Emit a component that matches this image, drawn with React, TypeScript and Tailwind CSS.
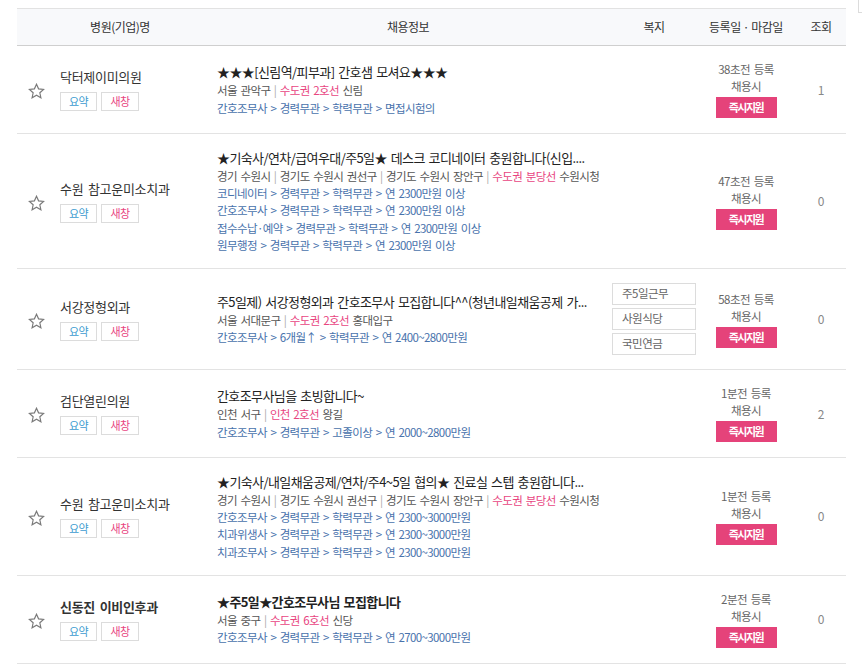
type Job = {
    name: string
    title: string
    areas: string[]
    station: string
    stop: string
    jobs: string[]
    benefits?: string[]
    posted: string
    views: number
    bold?: boolean
}

const jobs: Job[] = [
    {
        name: '닥터제이미의원',
        title: '★★★[신림역/피부과] 간호샘 모셔요★★★',
        areas: ['서울 관악구'],
        station: '수도권 2호선',
        stop: '신림',
        jobs: ['간호조무사 > 경력무관 > 학력무관 > 면접시험의'],
        posted: '38초전 등록',
        views: 1,
    },
    {
        name: '수원 참고운미소치과',
        title: '★기숙사/연차/급여우대/주5일★ 데스크 코디네이터 충원합니다(신입....',
        areas: ['경기 수원시', '경기도 수원시 권선구', '경기도 수원시 장안구'],
        station: '수도권 분당선',
        stop: '수원시청',
        jobs: [
            '코디네이터 > 경력무관 > 학력무관 > 연 2300만원 이상',
            '간호조무사 > 경력무관 > 학력무관 > 연 2300만원 이상',
            '접수수납·예약 > 경력무관 > 학력무관 > 연 2300만원 이상',
            '원무행정 > 경력무관 > 학력무관 > 연 2300만원 이상',
        ],
        posted: '47초전 등록',
        views: 0,
    },
    {
        name: '서강정형외과',
        title: '주5일제) 서강정형외과 간호조무사 모집합니다^^(청년내일채움공제 가...',
        areas: ['서울 서대문구'],
        station: '수도권 2호선',
        stop: '홍대입구',
        jobs: ['간호조무사 > 6개월↑ > 학력무관 > 연 2400~2800만원'],
        benefits: ['주5일근무', '사원식당', '국민연금'],
        posted: '58초전 등록',
        views: 0,
    },
    {
        name: '검단열린의원',
        title: '간호조무사님을 초빙합니다~',
        areas: ['인천 서구'],
        station: '인천 2호선',
        stop: '왕길',
        jobs: ['간호조무사 > 경력무관 > 고졸이상 > 연 2000~2800만원'],
        posted: '1분전 등록',
        views: 2,
    },
    {
        name: '수원 참고운미소치과',
        title: '★기숙사/내일채움공제/연차/주4~5일 협의★ 진료실 스텝 충원합니다...',
        areas: ['경기 수원시', '경기도 수원시 권선구', '경기도 수원시 장안구'],
        station: '수도권 분당선',
        stop: '수원시청',
        jobs: [
            '간호조무사 > 경력무관 > 학력무관 > 연 2300~3000만원',
            '치과위생사 > 경력무관 > 학력무관 > 연 2300~3000만원',
            '치과조무사 > 경력무관 > 학력무관 > 연 2300~3000만원',
        ],
        posted: '1분전 등록',
        views: 0,
    },
    {
        name: '신동진 이비인후과',
        title: '★주5일★간호조무사님 모집합니다',
        areas: ['서울 중구'],
        station: '수도권 6호선',
        stop: '신당',
        jobs: ['간호조무사 > 경력무관 > 학력무관 > 연 2700~3000만원'],
        posted: '2분전 등록',
        views: 0,
        bold: true,
    },
]

function StarOutline() {
    return (
        <svg width="17" height="16" viewBox="0 0 24 23" fill="none">
            <path
                d="M12 1.8l3 6.6 7.2.8-5.4 4.9 1.5 7.1L12 17.6l-6.3 3.6 1.5-7.1L1.8 9.2 9 8.4z"
                stroke="#7a7a7a"
                strokeWidth="1.7"
                strokeLinejoin="miter"
            />
        </svg>
    )
}

function JobRow({ job }: { job: Job }) {
    return (
        <div className="grid grid-cols-[43px_150px_396px_96px_88px_56px] items-center min-h-[88px] py-[14px] border-b border-[#e3e3e3]">
            {/* 관심 */}
            <div className="flex justify-end pr-[15px] pt-[3px]">
                <StarOutline />
            </div>
            {/* 병원명 */}
            <div className="flex flex-col">
                <div className={`text-[13px] leading-[18px] tracking-[-0.3px] [word-spacing:2px] text-[#333] whitespace-nowrap ${job.bold ? 'font-bold' : ''}`}>
                    {job.name}
                </div>
                <div className="flex gap-[4px] mt-[6px]">
                    <span className="w-[37px] h-[19px] border border-[#dcdcdc] flex items-center justify-center text-[11px] tracking-[-0.5px] text-[#3d9bd0]">요약</span>
                    <span className="w-[38px] h-[19px] border border-[#dcdcdc] flex items-center justify-center text-[11px] tracking-[-0.5px] text-[#e8457f]">새창</span>
                </div>
            </div>
            {/* 채용정보 */}
            <div className="pl-[7px] flex flex-col overflow-hidden">
                <div className={`text-[13px] leading-[20px] tracking-[-0.6px] [word-spacing:1.5px] text-[#222] whitespace-nowrap overflow-hidden ${job.bold ? 'font-bold' : ''}`}>
                    {job.title}
                </div>
                <div className="text-[11.5px] leading-[17.2px] tracking-[-0.6px] [word-spacing:1.5px] whitespace-nowrap text-[#555]">
                    {job.areas.map((a, i) => (
                        <span key={i}>
                            {a}
                            <span className="text-[#aaa]"> | </span>
                        </span>
                    ))}
                    <span className="text-[#e8457f]">{job.station}</span> {job.stop}
                </div>
                {job.jobs.map((j, i) => (
                    <div key={i} className="text-[11.5px] leading-[17.2px] tracking-[-0.6px] [word-spacing:1.5px] whitespace-nowrap text-[#4872ac]">
                        {j}
                    </div>
                ))}
            </div>
            {/* 복지 */}
            <div className="flex flex-col items-center gap-[3px]">
                {job.benefits?.map((b) => (
                    <div key={b} className="w-[84px] h-[22px] border border-[#dcdcdc] pl-[9px] flex items-center text-[11.5px] tracking-[-0.5px] text-[#666]">
                        {b}
                    </div>
                ))}
            </div>
            {/* 등록일 */}
            <div className="flex flex-col items-center">
                <div className="text-[11.5px] leading-[17px] tracking-[-0.5px] [word-spacing:1.5px] text-[#666]">{job.posted}</div>
                <div className="text-[11.5px] leading-[17px] tracking-[-0.5px] text-[#666]">채용시</div>
                <button className="mt-[2px] w-[61px] h-[21px] bg-[#e5437a] text-white text-[11px] font-bold tracking-[-1.5px] flex items-center justify-center">
                    즉시지원
                </button>
            </div>
            {/* 조회 */}
            <div className="pl-[6px] text-center text-[12px] text-[#888]">{job.views}</div>
        </div>
    )
}

export default function App() {
    return (
        <div className="w-full overflow-hidden bg-white font-['Noto_Sans_CJK_KR',sans-serif]">
            <div className="flex">
                <div className="ml-[17px] w-[829px] shrink-0 mt-[8px]">
                    {/* 헤더 */}
                    <div className="grid grid-cols-[193px_396px_96px_88px_56px] h-[38px] items-center bg-[#f8f9fb] border-t border-t-[#e2e2e2] border-b border-b-[#cfcfcf] text-[12px] tracking-[-0.5px] text-[#333]">
                        <div className="text-center pl-[13px]">병원(기업)명</div>
                        <div className="text-center">채용정보</div>
                        <div className="text-center">복지</div>
                        <div className="text-center">등록일 · 마감일</div>
                        <div className="text-center pl-[6px]">조회</div>
                    </div>
                    {jobs.map((job, i) => (
                        <JobRow key={i} job={job} />
                    ))}
                </div>
                <div className="ml-[12px] w-[4px] h-[13px] shrink-0 border-l border-b border-[#dcdcdc]"></div>
            </div>
        </div>
    )
}
